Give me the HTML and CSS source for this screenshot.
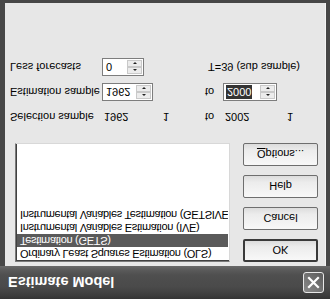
FILE: index.html
```html
<!DOCTYPE html>
<html>
<head>
<meta charset="utf-8">
<link rel="stylesheet" href="styles.css">
</head>
<body>
<div class="window">
  <div class="titlebar">
    <span class="title">Estimate Model</span>
    <span class="close">
      <svg width="13" height="13" viewBox="0 0 13 13"><path d="M2 2 L11 11 M11 2 L2 11" stroke="#fff" stroke-width="2.2" stroke-linecap="square" fill="none"/></svg>
    </span>
  </div>
  <div class="body">
    <div class="top">
      <div class="list">
        <div class="item">Ordinary Least Squares Estimation (OLS)</div>
        <div class="item sel">Testimation (GETS)</div>
        <div class="item">Instrumental Variables Estimation (IVE)</div>
        <div class="item">Instrumental Variables Testimation (GETSIVE</div>
      </div>
      <div class="buttons">
        <div class="btn default">OK</div>
        <div class="btn">Cancel</div>
        <div class="btn">Help</div>
        <div class="btn"><u>O</u>ptions...</div>
      </div>
    </div>
    <div class="form">
      <div class="lbl">Selection sample</div>
      <div class="val">1962</div>
      <div class="val">1</div>
      <div class="lbl">to</div>
      <div class="val">2002</div>
      <div class="val">1</div>

      <div class="lbl">Estimation sample</div>
      <div class="spin w51"><span class="txt">1962</span><span class="arrows"><span class="up"></span><span class="dn"></span></span></div>
      <div></div>
      <div class="lbl">to</div>
      <div class="spin w54"><span class="txt"><span class="hl">2000</span></span><span class="arrows"><span class="up"></span><span class="dn"></span></span></div>
      <div></div>

      <div class="lbl">Less forecasts</div>
      <div class="spin w42"><span class="txt">0</span><span class="arrows"><span class="up"></span><span class="dn"></span></span></div>
      <div></div>
      <div class="lbl wide">T=39 (sub sample)</div>
    </div>
  </div>
</div>
</body>
</html>
```

FILE: styles.css
```css
html, body {
  margin: 0;
  padding: 0;
  width: 330px;
  height: 299px;
  overflow: hidden;
  background: #e7e7e7;
}

.window {
  width: 330px;
  height: 299px;
  box-sizing: border-box;
  display: flex;
  flex-direction: column;
  background: #474747;
  transform: scaleY(-1);
  font-family: "Liberation Sans", Arial, sans-serif;
  font-size: 11px;
  color: #000;
}

.titlebar {
  height: 33px;
  flex: none;
  display: flex;
  align-items: center;
  justify-content: space-between;
  padding: 0 5px 0 8px;
  background: linear-gradient(to bottom, #333 0px, #3d3d3d 4px, #4a4a4a 12px, #4f4f4f 24px, #5d5d5d 30px, #6a6a6a 33px);
}

.title {
  color: #fff;
  font-family: "Liberation Sans Narrow", "Liberation Sans", Arial, sans-serif;
  font-weight: bold;
  font-size: 14.5px;
  line-height: 15px;
  margin-top: 1px;
}

.close {
  width: 19px;
  height: 19px;
  border: 1px solid #e8e8e8;
  border-radius: 3px;
  background: linear-gradient(135deg, #8a8a8a, #5c5c5c);
  display: flex;
  align-items: center;
  justify-content: center;
  margin-top: -1px;
  margin-right: 1px;
}

.body {
  flex: 1;
  margin: 0 4px 3px 5px;
  background: #e7e7e7;
  box-shadow: inset -1px 0 #f4f4f4;
  padding: 4px 6px 0 10px;
  display: flex;
  flex-direction: column;
}

.top {
  display: flex;
  height: 119px;
}

.list {
  width: 215px;
  height: 119px;
  box-sizing: border-box;
  background: #fff;
  border: 1px solid #7a7a7a;
  border-right-color: #d8d8d8;
  border-bottom-color: #d8d8d8;
  box-shadow: inset 1px 1px #404040;
  padding: 1px 1px 0 1px;
  overflow: hidden;
}

.item {
  height: 13px;
  line-height: 13px;
  padding-left: 3px;
  white-space: nowrap;
  overflow: hidden;
  letter-spacing: -0.3px;
}

.item.sel {
  background: #5a5a5a;
  color: #fff;
}

.buttons {
  margin-left: 13px;
  width: 75px;
  display: flex;
  flex-direction: column;
  justify-content: space-between;
}

.btn {
  height: 23px;
  box-sizing: border-box;
  border: 1px solid #6e6e6e;
  border-radius: 2px;
  background: linear-gradient(to bottom, #f8f8f8, #ececec 70%, #dcdcdc);
  display: flex;
  align-items: center;
  justify-content: center;
}

.btn.default {
  border: 2px solid #3a3a3a;
}

.form {
  margin-top: 17px;
  margin-left: -5px;
  display: grid;
  grid-template-columns: 92px 59px 44px 18px 62px 1fr;
  grid-auto-rows: 18px;
  row-gap: 7px;
  align-items: center;
}

.lbl, .val {
  line-height: 13px;
  white-space: nowrap;
}

.val {
  padding-left: 2px;
}

.wide {
  grid-column: 4 / 7;
  padding-left: 3px;
}

.spin {
  height: 18px;
  box-sizing: border-box;
  border: 1px solid #7d7d7d;
  background: #fff;
  display: flex;
  align-items: stretch;
  padding: 1px;
}

.w51 { width: 51px; }
.w54 { width: 54px; }
.w42 { width: 42px; }

.txt {
  flex: 1;
  line-height: 14px;
  padding-left: 2px;
  overflow: hidden;
}

.hl {
  display: inline-block;
  background: #333;
  color: #fff;
  height: 14px;
  padding: 0 1px;
  margin-left: -1px;
}

.arrows {
  width: 15px;
  display: flex;
  flex-direction: column;
}

.up, .dn {
  flex: 1;
  background: #ececec;
  border: 1px solid #c9c9c9;
  display: flex;
  align-items: center;
  justify-content: center;
}

.up::after {
  content: "";
  border-left: 2px solid transparent;
  border-right: 2px solid transparent;
  border-bottom: 2px solid #222;
}

.dn::after {
  content: "";
  border-left: 2px solid transparent;
  border-right: 2px solid transparent;
  border-top: 2px solid #222;
}
```
